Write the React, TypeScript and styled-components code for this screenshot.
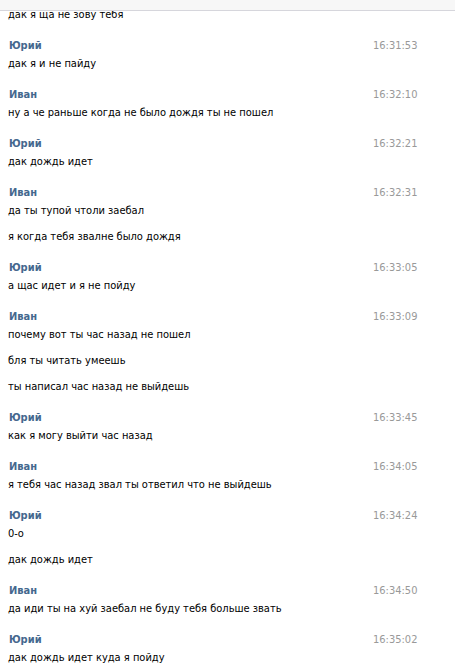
import styled, { createGlobalStyle } from "styled-components";

type Msg = {
  author?: string;
  time?: string;
  lines: string[];
};

const log: Msg[] = [
  { lines: ["дак я ща не зову тебя"] },
  { author: "Юрий", time: "16:31:53", lines: ["дак я и не пайду"] },
  {
    author: "Иван",
    time: "16:32:10",
    lines: ["ну а че раньше когда не было дождя ты не пошел"],
  },
  { author: "Юрий", time: "16:32:21", lines: ["дак дождь идет"] },
  {
    author: "Иван",
    time: "16:32:31",
    lines: ["да ты тупой чтоли заебал", "я когда тебя звалне было дождя"],
  },
  { author: "Юрий", time: "16:33:05", lines: ["а щас идет и я не пойду"] },
  {
    author: "Иван",
    time: "16:33:09",
    lines: [
      "почему вот ты час назад не пошел",
      "бля ты читать умеешь",
      "ты написал час назад не выйдешь",
    ],
  },
  { author: "Юрий", time: "16:33:45", lines: ["как я могу выйти час назад"] },
  {
    author: "Иван",
    time: "16:34:05",
    lines: ["я тебя час назад звал ты ответил что не выйдешь"],
  },
  { author: "Юрий", time: "16:34:24", lines: ["0-о", "дак дождь идет"] },
  {
    author: "Иван",
    time: "16:34:50",
    lines: ["да иди ты на хуй заебал не буду тебя больше звать"],
  },
  { author: "Юрий", time: "16:35:02", lines: ["дак дождь идет куда я пойду"] },
];

const GlobalStyle = createGlobalStyle`
  html, body {
    margin: 0;
    padding: 0;
    background: #fff;
  }
  body {
    font-family: "DejaVu Sans Condensed", "DejaVu Sans", Tahoma, sans-serif;
    font-stretch: condensed;
    font-size: 11px;
    color: #000;
    overflow: hidden;
  }
`;

const TopBar = styled.div`
  position: fixed;
  top: 0;
  left: 0;
  right: 0;
  height: 10px;
  background: #f7f7f7;
  border-bottom: 1px solid #d6d6dc;
  z-index: 2;
`;

const History = styled.div`
  padding: 8px 0 20px 8px;
  display: flex;
  flex-direction: column;
  gap: 17px;
`;

const Block = styled.div`
  display: flex;
  flex-direction: column;
`;

const Head = styled.div`
  display: grid;
  grid-template-columns: 1fr 82px;
  line-height: 14px;
  margin-bottom: 4px;
`;

const Author = styled.span`
  font-weight: bold;
  color: #45688e;
  padding-left: 1px;
`;

const Time = styled.span`
  color: #999;
`;

const Text = styled.div`
  line-height: 14px;
  & + & {
    margin-top: 12px;
  }
`;

export default function App() {
  return (
    <>
      <GlobalStyle />
      <TopBar />
      <History>
        {log.map((m, i) => (
          <Block key={i}>
            {m.author && (
              <Head>
                <Author>{m.author}</Author>
                <Time>{m.time}</Time>
              </Head>
            )}
            {m.lines.map((l, j) => (
              <Text key={j}>{l}</Text>
            ))}
          </Block>
        ))}
      </History>
    </>
  );
}
